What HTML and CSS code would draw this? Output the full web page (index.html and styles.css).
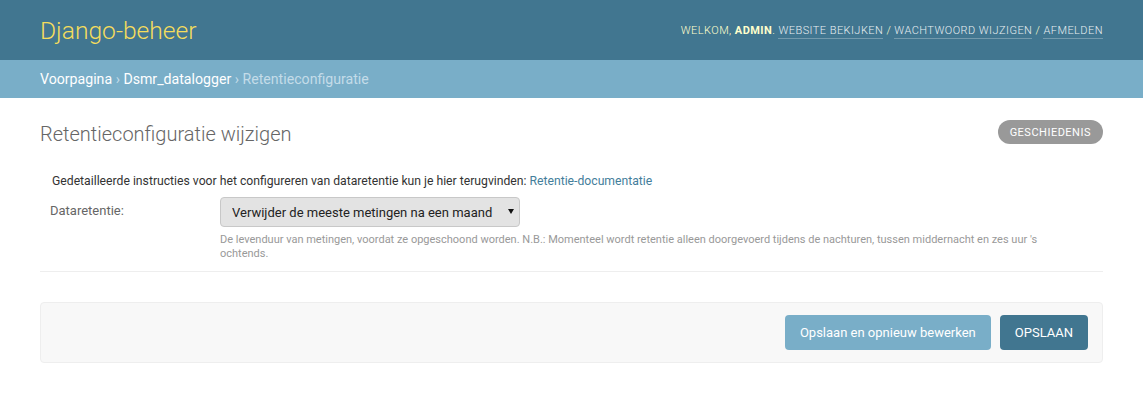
FILE: index.html
```html
<!DOCTYPE html>
<html lang="nl">
<head>
<meta charset="utf-8">
<title>Retentieconfiguratie wijzigen | Django-beheer</title>
<link rel="stylesheet" href="styles.css">
</head>
<body>
<div class="header">
  <div class="branding"><h1 class="site-name">Django-beheer</h1></div>
  <div class="user-tools">
    Welkom, <strong>admin</strong>. <a href="#">Website bekijken</a> / <a href="#">Wachtwoord wijzigen</a> / <a href="#">Afmelden</a>
  </div>
</div>
<div class="breadcrumbs">
  <a href="#">Voorpagina</a> › <a href="#">Dsmr_datalogger</a> › Retentieconfiguratie
</div>
<div class="content">
  <div class="title-row">
    <h1 class="page-title">Retentieconfiguratie wijzigen</h1>
    <a class="history" href="#">Geschiedenis</a>
  </div>
  <form class="change-form">
    <fieldset class="module">
      <div class="description">Gedetailleerde instructies voor het configureren van dataretentie kun je hier terugvinden: <a href="#">Retentie-documentatie</a></div>
      <div class="form-row">
        <label class="field-label" for="retention">Dataretentie:</label>
        <div class="field-body">
          <div class="select-wrap">
            <select id="retention" class="select">
              <option>Verwijder de meeste metingen na een maand</option>
            </select>
          </div>
          <div class="help">De levenduur van metingen, voordat ze opgeschoond worden. N.B.: Momenteel wordt retentie alleen doorgevoerd tijdens de nachturen, tussen middernacht en zes uur 's ochtends.</div>
        </div>
      </div>
    </fieldset>
    <div class="submit-row">
      <button type="button" class="btn">Opslaan en opnieuw bewerken</button>
      <button type="button" class="btn btn-default">Opslaan</button>
    </div>
  </form>
</div>
</body>
</html>
```
FILE: styles.css
```css
html, body {
  margin: 0;
  padding: 0;
}
body {
  font-family: Roboto, "DejaVu Sans", Arial, sans-serif;
  font-size: 14px;
  color: #333;
  background: #fff;
}
a {
  text-decoration: none;
}
.header {
  display: flex;
  justify-content: space-between;
  align-items: center;
  height: 60px;
  box-sizing: border-box;
  padding: 0 40px;
  background: #417690;
  color: #ffc;
}
.site-name {
  margin: 0 0 -1px;
  font-weight: 300;
  font-size: 24.6px;
  color: #f5dd5d;
}
.user-tools {
  font-weight: 300;
  font-size: 11px;
  letter-spacing: 0.45px;
  text-transform: uppercase;
  margin-top: 1px;
}
.user-tools strong {
  font-weight: 700;
}
.user-tools a {
  color: #fff;
  opacity: 0.88;
  border-bottom: 1px solid rgba(255, 255, 255, 0.3);
  padding-bottom: 1px;
}
.breadcrumbs {
  background: #79aec8;
  padding: 10px 40px;
  font-size: 14.15px;
  line-height: 18px;
  color: #c4dce8;
}
.breadcrumbs a {
  color: #fff;
}
.content {
  padding: 20px 40px;
}
.title-row {
  display: flex;
  justify-content: space-between;
  align-items: flex-start;
  margin-bottom: 20px;
}
.page-title {
  margin: 4px 0 0;
  font-weight: 300;
  font-size: 20px;
  line-height: 24px;
  color: #666;
}
.history {
  margin-top: 2px;
  display: block;
  padding: 6px 12px 5px;
  background: #999;
  border-radius: 15px;
  font-size: 11px;
  line-height: 13px;
  font-weight: 400;
  letter-spacing: 0.5px;
  text-transform: uppercase;
  color: #fff;
}
.change-form {
  margin: 0;
}
.module {
  margin: 0 0 30px;
  padding: 0;
  border: none;
  border-bottom: 1px solid #eee;
  min-width: 0;
}
.description {
  padding: 7px 12px 1px;
  font-size: 12.2px;
  line-height: 16px;
  color: #333;
}
.description a {
  color: #447e9b;
}
.form-row {
  display: flex;
  padding: 7px 10px 10px;
  font-size: 13px;
}
.field-label {
  width: 160px;
  flex: none;
  padding: 6px 10px 0 0;
  color: #666;
  font-size: 13px;
  line-height: 16px;
}
.field-body {
  flex: 1;
}
.select-wrap {
  position: relative;
  width: 300px;
}
.select {
  -webkit-appearance: none;
  appearance: none;
  display: block;
  width: 300px;
  height: 30px;
  margin: 0;
  padding: 0 24px 0 11px;
  border: 1px solid #c8c8c8;
  border-radius: 4px;
  background: #e3e3e3;
  font-family: Roboto, "DejaVu Sans", Arial, sans-serif;
  font-size: 13px;
  color: #222;
}
.select-wrap::after {
  content: "";
  position: absolute;
  right: 6px;
  top: 12px;
  border-left: 3px solid transparent;
  border-right: 3px solid transparent;
  border-top: 5px solid #111;
  pointer-events: none;
}
.help {
  margin-top: 6px;
  padding-right: 40px;
  font-size: 11px;
  line-height: 14px;
  color: #999;
}
.submit-row {
  display: flex;
  justify-content: flex-end;
  gap: 9px;
  padding: 12px 14px;
  background: #f8f8f8;
  border: 1px solid #eee;
  border-radius: 4px;
}
.btn {
  height: 35px;
  padding: 0 15px;
  border: none;
  border-radius: 4px;
  background: #79aec8;
  color: #fff;
  font-family: Roboto, "DejaVu Sans", Arial, sans-serif;
  font-size: 13px;
  cursor: pointer;
}
.btn-default {
  background: #417690;
  text-transform: uppercase;
}
```
